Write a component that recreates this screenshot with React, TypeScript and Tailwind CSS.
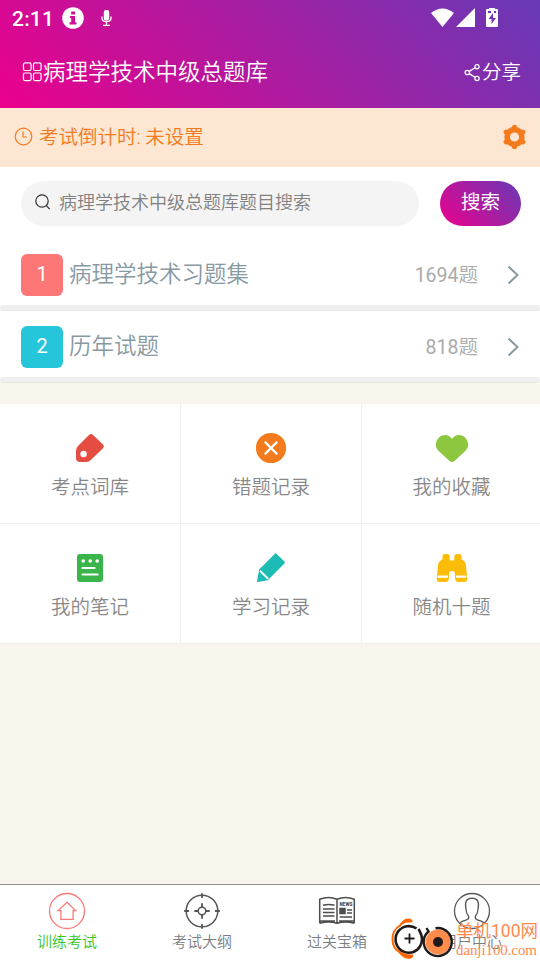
import type { FC, ReactNode } from 'react';

const FONT = "font-[Roboto,'Noto_Sans_CJK_SC',sans-serif]";

interface Bank {
  index: number;
  name: string;
  count: number;
  badge: string;
}

interface Entry {
  label: string;
  icon: ReactNode;
}

const banks: Bank[] = [
  { index: 1, name: '病理学技术习题集', count: 1694, badge: 'bg-[#fd7777]' },
  { index: 2, name: '历年试题', count: 818, badge: 'bg-[#26c6da]' },
];

const entries: Entry[] = [
  {
    label: '考点词库',
    icon: (
      <svg width="36" height="36" viewBox="0 0 36 36">
        <path d="M17.2 4.8Q19 3 20.8 4.8L31 14.6Q32.8 16.4 31 18.2L18.6 30.2Q16.8 32 14.2 32H8Q4 32 4 28V20.8Q4 18 6 16Z" fill="#e54d42" />
        <circle cx="11.6" cy="24" r="3.2" fill="#fff" />
      </svg>
    ),
  },
  {
    label: '错题记录',
    icon: (
      <svg width="36" height="36" viewBox="0 0 36 36">
        <circle cx="18" cy="18" r="15.1" fill="#f37b1d" />
        <path d="M12.4 12.4 23.6 23.6M23.6 12.4 12.4 23.6" stroke="#fff" strokeWidth="2.2" strokeLinecap="round" />
      </svg>
    ),
  },
  {
    label: '我的收藏',
    icon: (
      <svg width="36" height="36" viewBox="0 0 36 36">
        <path d="M18 8.8C21 4 27 3.9 30.5 7C35.2 11.2 35 17.2 31.6 20.8L20.4 31Q18 33.2 15.6 31L4.4 20.8C1 17.2 .8 11.2 5.5 7C9 3.9 15 4 18 8.8Z" fill="#8dc63f" />
      </svg>
    ),
  },
  {
    label: '我的笔记',
    icon: (
      <svg width="36" height="36" viewBox="0 0 36 36">
        <rect x="5" y="4" width="26" height="28" rx="3" fill="#39b54a" />
        <circle cx="11.2" cy="11" r="1.8" fill="#fff" />
        <circle cx="18.2" cy="11" r="1.8" fill="#fff" />
        <circle cx="25.2" cy="11" r="1.8" fill="#fff" />
        <path d="M10.5 18H22.5M10.5 24.5H25.7" stroke="#fff" strokeWidth="2.2" strokeLinecap="round" />
      </svg>
    ),
  },
  {
    label: '学习记录',
    icon: (
      <svg width="36" height="36" viewBox="0 0 36 36">
        <path d="M21.6 3.9Q22.7 2.7 23.8 3.9L31.4 11.4Q32.5 12.5 31.4 13.6L14.8 30.2L4.9 32Q3.9 32 4 31L6.2 19.4Z" fill="#1cbbb4" />
        <path d="M7.6 21.4 14.6 28.2" stroke="#fff" strokeWidth="2" strokeLinecap="round" />
      </svg>
    ),
  },
  {
    label: '随机十题',
    icon: (
      <svg width="36" height="36" viewBox="0 0 36 36">
        <path d="M8.4 7.2Q8.4 4 11.2 4H13Q15.7 4 15.7 7V9.5Q15.7 10.6 16.8 10.6H19.2Q20.3 10.6 20.3 9.5V7Q20.3 4 23 4H24.8Q27.6 4 27.6 7.2V9.3Q31.5 11.6 31.9 14.5L33.3 28.6Q33.4 32 30.5 32H24.5Q21.4 32 21.2 29L20.7 22.6Q20.5 21 18.9 21H17.1Q15.5 21 15.3 22.6L14.8 29Q14.6 32 11.5 32H5.5Q2.6 32 2.7 28.6L4.1 14.5Q4.5 11.6 8.4 9.3Z" fill="#fbbd08" />
        <path d="M4.5 26.7H13M23 26.7H31.5" stroke="#fff" strokeWidth="2.3" strokeLinecap="round" />
      </svg>
    ),
  },
];

const tabs: Entry[] = [
  {
    label: '训练考试',
    icon: (
      <svg width="38" height="38" viewBox="0 0 38 38" fill="none" stroke="#fd7777" strokeWidth="1.3">
        <circle cx="19" cy="19" r="17.5" />
        <path d="M19 10.3 10.3 18.6H12.9V27.3H25.1V18.6H27.7Z" />
      </svg>
    ),
  },
  {
    label: '考试大纲',
    icon: (
      <svg width="38" height="38" viewBox="0 0 38 38" fill="none" stroke="#555" strokeWidth="1.5">
        <circle cx="19" cy="19" r="15.8" />
        <circle cx="19" cy="19" r="3.8" />
        <path d="M19 1.2V6M19 32V36.8M1.2 19H6M32 19H36.8M19 11.3V15.2M19 22.8V26.7M11.3 19H15.2M22.8 19H26.7" strokeWidth="1.8" />
      </svg>
    ),
  },
  {
    label: '过关宝箱',
    icon: (
      <svg width="38" height="38" viewBox="0 0 38 38" fill="none" stroke="#4d4d4d" strokeWidth="1.5">
        <path d="M1.7 31.3V7.2Q10.5 3.8 19 7.2Q27.5 3.8 36.3 7.2V31.3M1.7 31.3Q10.5 28.5 19 31.3Q27.5 28.5 36.3 31.3M19 7.2V31.3M1.7 29H17M21 29H36.3" />
        <path d="M5 13.2Q11 11.8 16.5 13.2M5 17H16.5M5 20.5H16.5M5 24H16.5M29 18H34M29 21H34M21.7 25H34" />
        <rect x="22" y="16.5" width="5" height="5" fill="#4d4d4d" />
        <text x="21.5" y="13.6" fontSize="5" fontWeight="900" fill="#4d4d4d" stroke="none" textLength="13" lengthAdjust="spacingAndGlyphs">NEWS</text>
      </svg>
    ),
  },
  {
    label: '用户中心',
    icon: (
      <svg width="38" height="38" viewBox="0 0 38 38" fill="none" stroke="#555" strokeWidth="1.3">
        <circle cx="19" cy="19" r="17.5" />
        <path d="M6.8 31Q8.5 29.3 13.5 27.9Q16.4 26.9 15.6 24.3Q13 21.3 12.9 16.5Q10.800 6.300 19 6.100Q27.200 6.300 25.100 16.500Q25 21.300 22.400 24.300Q21.600 26.900 24.500 27.900Q29.500 29.300 31.200 31" />
      </svg>
    ),
  },
];

const StatusBar: FC = () => (
  <div className="flex h-9 items-center pl-3 pr-[41px] pt-0.5">
    <span className="w-[50px] text-[21px] font-medium leading-none tracking-[0.2px]">2:11</span>
    <svg className="-mt-[3px]" width="22" height="22" viewBox="0 0 22 22">
      <circle cx="11" cy="11" r="10.8" fill="#fff" />
      <path d="M9.2 4.6H13V7.4H9.2ZM8 9H13V15.2H14.5V17.5H7.5V15.2H9.2V11H8Z" fill="#cf0e96" />
    </svg>
    <svg className="-mt-[3px] ml-[17px]" width="11" height="18" viewBox="0 0 11 18" fill="none" stroke="#fff">
      <rect x="2.8" y="1" width="5.4" height="10.5" rx="2" fill="#fff" stroke="none" />
      <path d="M1 7.5V9Q1 12.7 5.5 12.7T10 9V7.5M5.5 12.7V16M2 16.3H9" strokeWidth="1.3" />
    </svg>
    <svg className="-mt-[3px] ml-auto" width="68" height="20" viewBox="0 0 68 20" fill="#fff">
      <path d="M0 5Q11.5-4 23 5L11.5 19Z" />
      <path d="M25 19 44 0V19Z" />
      <path fillRule="evenodd" d="M58-.5H64V1H66Q67 1 67 2V18Q67 19 66 19H56Q55 19 55 18V2Q55 1 56 1H58ZM57 3V5H60V3ZM63 3V5H65V3ZM62 5 57.5 11H60.5V16L65 10H62Z" />
    </svg>
  </div>
);

const Header: FC = () => (
  <header className="h-[108px] bg-[linear-gradient(45deg,#ec008c,#6739b6)] text-white">
    <StatusBar />
    <div className="flex h-[72px] items-center justify-between pl-[22px] pr-[19px]">
      <div className="flex items-center">
        <svg width="21" height="20" viewBox="0 0 21 20" fill="none" stroke="#fff" strokeWidth="1.2">
          <rect x="1.5" y="0.9" width="7.6" height="7.6" rx="1.5" />
          <rect x="11.5" y="0.9" width="7.6" height="7.6" rx="1.5" />
          <rect x="1.5" y="11" width="7.6" height="7.6" rx="1.5" />
          <rect x="11.5" y="11" width="7.6" height="7.6" rx="1.5" />
        </svg>
        <h1 className="text-[22.5px] font-[350] leading-8">病理学技术中级总题库</h1>
      </div>
      <div className="flex items-center pt-px">
        <svg className="mr-px" width="17" height="18" viewBox="0 0 17 18" fill="none" stroke="#fff" strokeWidth="1.3">
          <circle cx="3.3" cy="8.5" r="2.2" />
          <circle cx="13" cy="2.7" r="2.1" />
          <circle cx="13" cy="14.5" r="2.1" />
          <path d="M5.2 7.4 11.2 3.8M5.2 9.6 11.2 13.4" />
        </svg>
        <span className="text-[19.5px] font-[350] leading-7">分享</span>
      </div>
    </div>
  </header>
);

const Countdown: FC = () => (
  <section className="flex h-[59px] items-center bg-[#fde6d2] pl-[14px] pr-[13px] text-[#f37b1d]">
    <svg className="-mt-0.5" width="19" height="19" viewBox="0 0 19 19" fill="none" stroke="currentColor" strokeWidth="1.2">
      <circle cx="9.5" cy="9.5" r="8.3" />
      <path d="M9 4.5V10H13" />
    </svg>
    <span className="ml-1.5 text-[19.5px] font-[350] leading-7">考试倒计时: 未设置</span>
    <svg className="-mt-px ml-auto" width="25" height="26" viewBox="0 0 25 26" fill="none" stroke="currentColor">
      <circle cx="12.5" cy="13" r="7.4" strokeWidth="5.6" />
      {/* six rounded teeth, one every 60 degrees */}
      <path
        d="M12.5 3.2V5M20.9 8.100 19.500 9M20.900 17.900 19.500 17M12.500 22.800V21M4.100 17.900 5.500 17M4.100 8.100 5.500 9"
        strokeWidth="5"
        strokeLinecap="round"
      />
    </svg>
  </section>
);

const SearchRow: FC = () => (
  <div className="flex h-[72px] bg-white pl-[21px] pr-[19px] pt-[14px]">
    <div className="flex h-[45px] w-[398px] items-center rounded-full bg-[#f4f4f4] pl-[14px]">
      <svg className="-mt-[3px]" width="16" height="16" viewBox="0 0 16 16" fill="none" stroke="#333" strokeWidth="1.2">
        <circle cx="7" cy="7" r="6.2" />
        <path d="M11.3 11.6 14.6 15" />
      </svg>
      <span className="-mt-px ml-2 text-[18px] font-[350] leading-6 text-[#808080]">病理学技术中级总题库题目搜索</span>
    </div>
    <button className="ml-auto h-[45px] w-[81px] rounded-full bg-[linear-gradient(45deg,#ec008c,#6739b6)] pb-px text-[19.5px] leading-7 text-white">
      搜索
    </button>
  </div>
);

const BankRow: FC<{ bank: Bank }> = ({ bank }) => (
  <li className="h-[72px] bg-white">
    <div className="flex h-[66px] items-center pl-[21px] pr-5 pt-1.5">
      <span className={`flex size-[42px] items-center justify-center rounded-md pb-0.5 text-[20px] text-white ${bank.badge}`}>
        {bank.index}
      </span>
      <span className="-mt-[3px] ml-1.5 text-[22.5px] font-[350] leading-8 text-[#8799a3]">{bank.name}</span>
      <span className="ml-auto pt-px text-[19.5px] leading-7 text-[#aaa]">
        {bank.count}
        <span className="font-[350]">题</span>
      </span>
      <svg className="ml-[29px]" width="13" height="20" viewBox="0 0 13 20" fill="none" stroke="#8799a3" strokeWidth="2">
        <path d="M1.5 1.5 10.5 10 1.5 18.5" />
      </svg>
    </div>
    <div className="h-1.5 rounded-sm border-b border-[#e8e8e8] bg-[#efefef]" />
  </li>
);

const Watermark: FC = () => (
  <div className="absolute bottom-0 right-0 flex h-[44px] w-[150px] text-[#ff8a4d]">
    <svg width="64" height="44" viewBox="0 0 64 44" fill="none">
      <path d="M21 4Q15 3 10 9.500Q2.500 14 2.500 23Q2.500 33 10 36Q15 43 22 41" stroke="#f60" strokeWidth="2" />
      <path d="M10 8Q17-1 23 5Q22 7 19 6.500Q14 6 9 11ZM8 34Q15 39 23 38.500Q24 40 22 42Q15 45 8 36Z" fill="#f60" />
      <path d="M26.500 12.500A13.300 13.300 0 1 0 27.500 33.500Q32 29 32 23Q32 19 28.500 13" stroke="#211a1b" strokeWidth="2.600" />
      <path d="M19.500 17.500V27.500M14.500 22.500H24.500" stroke="#211a1b" strokeWidth="1.800" />
      <circle cx="48" cy="26" r="12.500" fill="#ff8c4b" />
      <path d="M45.500 12.200A14 14 0 1 1 38.500 15.500L36.500 12" stroke="#211a1b" strokeWidth="2.400" />
      <circle cx="48" cy="26" r="5" fill="#211a1b" />
    </svg>
    <div className="w-[84px] pl-0.5 pt-1">
      <div className="whitespace-nowrap text-[17.5px] leading-[22px]">单机100网</div>
      <div className="font-['Liberation_Serif',serif] text-[15px] leading-4 tracking-[-0.1px]">danji100.com</div>
    </div>
  </div>
);

const TabBar: FC = () => (
  <nav className="relative mt-auto h-[76px] border-t border-[#8f8f8f] bg-white">
    <div className="-ml-px mr-px grid grid-cols-4">
      {tabs.map((tab, i) => (
        <div key={tab.label} className="flex flex-col items-center pt-[7px]">
          {tab.icon}
          <span className={`pl-px text-[15px] font-[350] leading-6 ${i === 0 ? 'text-[#39c51b]' : 'text-[#7a7e83]'}`}>{tab.label}</span>
        </div>
      ))}
    </div>
    <Watermark />
  </nav>
);

export default function App() {
  return (
    <div className={`flex h-[960px] w-[540px] flex-col overflow-hidden bg-[#f8f5ed] ${FONT}`}>
      <Header />
      <Countdown />
      <SearchRow />
      <ul>
        {banks.map((bank) => (
          <BankRow key={bank.index} bank={bank} />
        ))}
      </ul>
      <div className="mt-[21px] grid grid-cols-[181px_181px_178px]">
        {entries.map((entry, i) => (
          <div
            key={entry.label}
            className={`flex h-[120px] flex-col items-center border-b border-[#eee] bg-white pt-[26px] ${i % 3 === 2 ? 'pl-px' : 'border-r'}`}
          >
            {entry.icon}
            <span className="mt-2 text-[19.5px] font-[350] leading-7 text-[#888]">{entry.label}</span>
          </div>
        ))}
      </div>
      <TabBar />
    </div>
  );
}
